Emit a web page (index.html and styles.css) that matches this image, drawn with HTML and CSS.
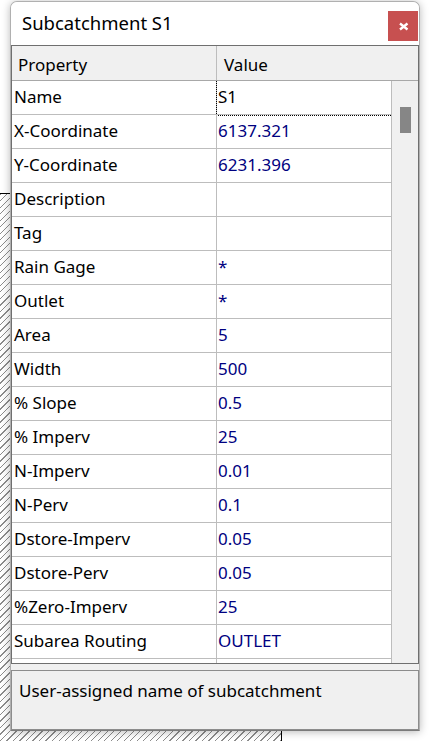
FILE: index.html
```html
<!DOCTYPE html>
<html>
<head>
<meta charset="utf-8">
<link rel="stylesheet" href="styles.css">
</head>
<body>
<div class="hatch"></div>
<div class="window">
  <div class="titlebar">
    <span class="title">Subcatchment S1</span>
    <div class="close">
      <svg width="30" height="30" viewBox="0 0 30 30"><path d="M12 12.5 L19.5 18.5 M19.5 12.5 L12 18.5" stroke="#fff" stroke-width="2.4" fill="none"/></svg>
    </div>
  </div>
  <div class="table">
    <div class="head">
      <div class="hcell hprop">Property</div>
      <div class="hcell">Value</div>
    </div>
    <div class="body">
      <div class="rows">
        <div class="c p">Name</div><div class="c v focus">S1</div>
        <div class="c p">X-Coordinate</div><div class="c v">6137.321</div>
        <div class="c p">Y-Coordinate</div><div class="c v">6231.396</div>
        <div class="c p">Description</div><div class="c v"></div>
        <div class="c p">Tag</div><div class="c v"></div>
        <div class="c p">Rain Gage</div><div class="c v">*</div>
        <div class="c p">Outlet</div><div class="c v">*</div>
        <div class="c p">Area</div><div class="c v">5</div>
        <div class="c p">Width</div><div class="c v">500</div>
        <div class="c p">% Slope</div><div class="c v">0.5</div>
        <div class="c p">% Imperv</div><div class="c v">25</div>
        <div class="c p">N-Imperv</div><div class="c v">0.01</div>
        <div class="c p">N-Perv</div><div class="c v">0.1</div>
        <div class="c p">Dstore-Imperv</div><div class="c v">0.05</div>
        <div class="c p">Dstore-Perv</div><div class="c v">0.05</div>
        <div class="c p">%Zero-Imperv</div><div class="c v">25</div>
        <div class="c p">Subarea Routing</div><div class="c v">OUTLET</div>
        <div class="c p"></div><div class="c v"></div>
      </div>
      <div class="scroll"><div class="thumb"></div></div>
    </div>
  </div>
  <div class="desc">User-assigned name of subcatchment</div>
</div>
</body>
</html>
```
FILE: styles.css
```css
html, body {
  margin: 0;
  padding: 0;
}
body {
  position: relative;
  width: 430px;
  height: 741px;
  overflow: hidden;
  background: #fff;
  font-family: "Noto Sans", "Open Sans", sans-serif;
  color: #000;
}
.hatch {
  position: absolute;
  left: -1px;
  top: 193px;
  width: 283px;
  height: 549px;
  box-sizing: border-box;
  border: 1px solid #000;
  background: repeating-linear-gradient(135deg, #8c8c8c 0 1px, transparent 1px 4.6px);
}
.window {
  position: relative;
  z-index: 1;
  margin: 1px 0 0 10px;
  width: 410px;
  box-sizing: border-box;
  border: 1px solid #b0b0b0;
  border-bottom-color: #7a7a7a;
  border-radius: 7px 7px 0 0;
  background: #f0f0f0;
  box-shadow: 0 1px 8px rgba(0, 0, 0, 0.28);
}
.titlebar {
  height: 43px;
  background: #fff;
  border-radius: 6px 6px 0 0;
  display: flex;
  align-items: center;
  justify-content: space-between;
}
.title {
  font-size: 18.5px;
  padding-left: 11px;
  margin-top: -2px;
}
.close {
  align-self: flex-start;
  margin-top: 9px;
  margin-right: 1px;
  width: 30px;
  height: 30px;
  background: #c75050;
}
.close svg {
  display: block;
}
.table {
  border: 1px solid #6f6f6f;
  height: 619px;
  box-sizing: border-box;
  background: #fff;
  overflow: hidden;
}
.head {
  display: grid;
  grid-template-columns: 205px 1fr;
  height: 35px;
  box-sizing: border-box;
  border-bottom: 1px solid #a8a8a8;
  background: #f0f0f0;
}
.hcell {
  font-size: 17px;
  line-height: 30px;
  padding-top: 4px;
  padding-left: 7px;
}
.hprop {
  padding-left: 6px;
  border-right: 1px solid #bdbdbd;
}
.body {
  display: flex;
  height: 582px;
  overflow: hidden;
}
.rows {
  width: 380px;
  display: grid;
  grid-template-columns: 205px 175px;
  grid-auto-rows: 34px;
}
.c {
  box-sizing: border-box;
  border-right: 1px solid #bdbdbd;
  border-bottom: 1px solid #bdbdbd;
  font-size: 17px;
  line-height: 31px;
  padding-bottom: 2px;
  white-space: nowrap;
  overflow: hidden;
}
.p {
  padding-left: 2px;
}
.v {
  padding-left: 1px;
  color: #000080;
}
.focus {
  color: #000;
  outline: 1px dotted #000;
}
.scroll {
  width: 26px;
  background: #f0f0f0;
  padding: 26px 0 0 8px;
  box-sizing: border-box;
}
.thumb {
  width: 11px;
  height: 26px;
  background: #868686;
}
.desc {
  margin-top: 6px;
  height: 60px;
  box-sizing: border-box;
  border: 1px solid #8c8c8c;
  font-size: 17px;
  line-height: 22px;
  padding: 9px 0 0 7px;
}
```
